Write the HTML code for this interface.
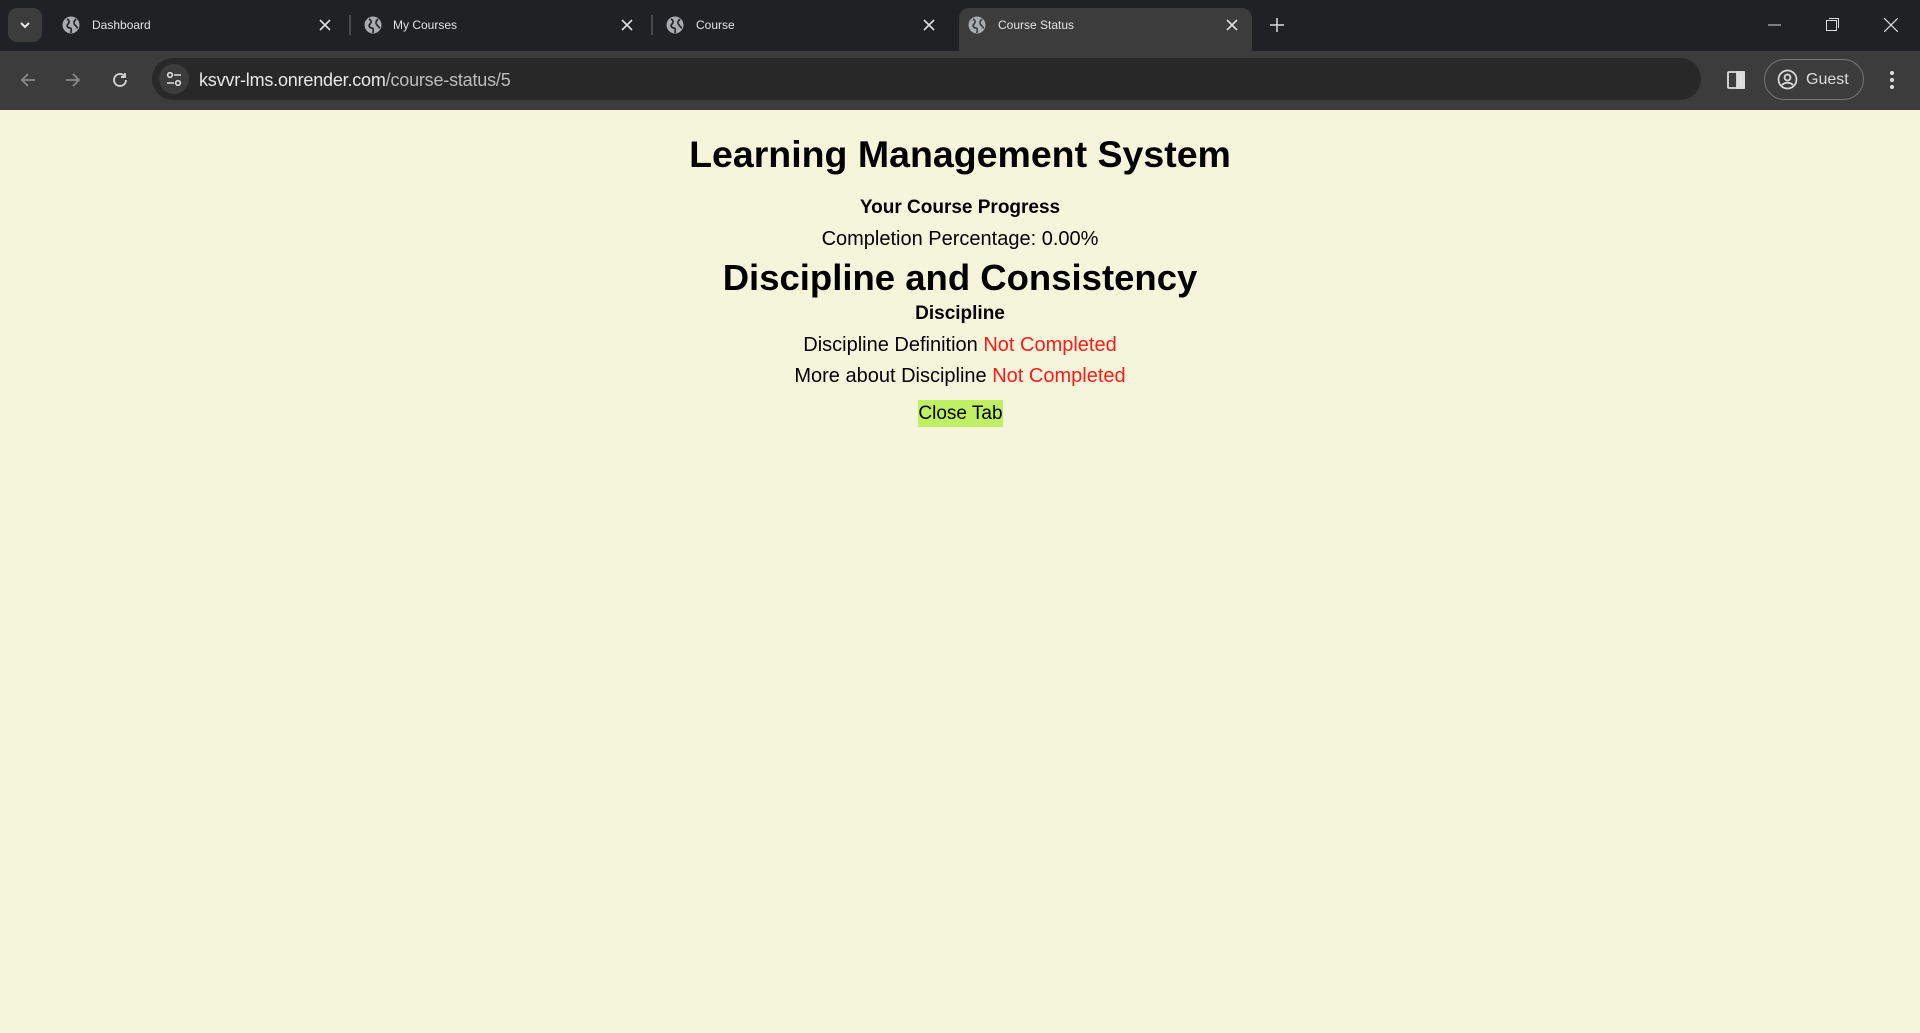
<!DOCTYPE html>
<html><head><meta charset="utf-8"><style>
*{margin:0;padding:0;box-sizing:border-box}
body{width:1920px;height:1033px;background:#f5f5dc;font-family:"Liberation Sans",sans-serif;position:relative;overflow:hidden}
.tabbar{position:absolute;left:0;top:0;width:1920px;height:51px;background:#202124}
.toolbar{position:absolute;left:0;top:51px;width:1920px;height:59px;background:#3c3c3c}
.abs{position:absolute}
.tabt{position:absolute;top:18px;font-size:12px;color:#e3e3e3}
.c{position:absolute;left:0;width:1920px;text-align:center;color:#000;white-space:nowrap}
.red{color:#ff1a1a}
</style></head><body>
<div class="tabbar">
 <div class="abs" style="left:8px;top:8px;width:34px;height:34px;border-radius:9px;background:#3c3c3c"></div>
 <svg class="abs" style="left:19px;top:19px" width="12" height="12" viewBox="0 0 12 12"><path d="M2 4l4 4 4-4" stroke="#e8e8e8" stroke-width="2" fill="none"/></svg>
 <div class="abs" style="left:959px;top:8px;width:293px;height:43px;background:#3c3c3c;border-radius:10px 10px 0 0"></div>
 <svg class="abs" style="left:62px;top:16px" width="18" height="18" viewBox="0 0 18 18"><circle cx="9" cy="9" r="8.5" fill="#a8abb0"/><path d="M5 3c2 1 3 3 1 5s0 4 2 4 1 3 1 5M14 3c-2 2-3 4-1 6s2 3 3 3" stroke="#202124" stroke-width="1.6" fill="none"/></svg>
 <svg class="abs" style="left:364px;top:16px" width="18" height="18" viewBox="0 0 18 18"><circle cx="9" cy="9" r="8.5" fill="#a8abb0"/><path d="M5 3c2 1 3 3 1 5s0 4 2 4 1 3 1 5M14 3c-2 2-3 4-1 6s2 3 3 3" stroke="#202124" stroke-width="1.6" fill="none"/></svg>
 <svg class="abs" style="left:666px;top:16px" width="18" height="18" viewBox="0 0 18 18"><circle cx="9" cy="9" r="8.5" fill="#a8abb0"/><path d="M5 3c2 1 3 3 1 5s0 4 2 4 1 3 1 5M14 3c-2 2-3 4-1 6s2 3 3 3" stroke="#202124" stroke-width="1.6" fill="none"/></svg>
 <svg class="abs" style="left:968px;top:16px" width="18" height="18" viewBox="0 0 18 18"><circle cx="9" cy="9" r="8.5" fill="#a8abb0"/><path d="M5 3c2 1 3 3 1 5s0 4 2 4 1 3 1 5M14 3c-2 2-3 4-1 6s2 3 3 3" stroke="#3c3c3c" stroke-width="1.6" fill="none"/></svg>
 <div class="tabt" style="left:92px">Dashboard</div>
 <div class="tabt" style="left:393px">My Courses</div>
 <div class="tabt" style="left:696px">Course</div>
 <div class="tabt" style="left:998px">Course Status</div>
 <svg class="abs" style="left:319px;top:19px" width="12" height="12"><path d="M1 1l10 10M11 1L1 11" stroke="#dcdcdc" stroke-width="1.6"/></svg>
 <svg class="abs" style="left:621px;top:19px" width="12" height="12"><path d="M1 1l10 10M11 1L1 11" stroke="#dcdcdc" stroke-width="1.6"/></svg>
 <svg class="abs" style="left:923px;top:19px" width="12" height="12"><path d="M1 1l10 10M11 1L1 11" stroke="#dcdcdc" stroke-width="1.6"/></svg>
 <svg class="abs" style="left:1226px;top:19px" width="12" height="12"><path d="M1 1l10 10M11 1L1 11" stroke="#dcdcdc" stroke-width="1.6"/></svg>
 <div class="abs" style="left:349px;top:15px;width:2px;height:20px;background:#4a4a4a"></div>
 <div class="abs" style="left:651px;top:15px;width:2px;height:20px;background:#4a4a4a"></div>
 <svg class="abs" style="left:1270px;top:18px" width="14" height="14"><path d="M7 0v14M0 7h14" stroke="#dcdcdc" stroke-width="1.5"/></svg>
 <svg class="abs" style="left:1768px;top:24px" width="13" height="2"><path d="M0 1h13" stroke="#ddd"/></svg>
 <svg class="abs" style="left:1826px;top:18px" width="13" height="13" fill="none" stroke="#ddd"><rect x="0.5" y="2.5" width="10" height="10"/><path d="M3 0.5h9.5v9.5"/></svg>
 <svg class="abs" style="left:1884px;top:18px" width="14" height="14"><path d="M0 0l14 14M14 0L0 14" stroke="#ddd" stroke-width="1.2"/></svg>
</div>
<div class="toolbar">
 <svg class="abs" style="left:20px;top:21px" width="16" height="16" fill="none" stroke="#8a8a8a" stroke-width="1.8"><path d="M15 8H2M8 2L2 8l6 6"/></svg>
 <svg class="abs" style="left:65px;top:21px" width="16" height="16" fill="none" stroke="#8a8a8a" stroke-width="1.8"><path d="M1 8h13M8 2l6 6-6 6"/></svg>
 <svg class="abs" style="left:111px;top:20px" width="18" height="18" fill="none" stroke="#d0d0d0" stroke-width="1.9"><path d="M15 9a6 6 0 1 1-2-4.5"/><path d="M14 2v4h-4"/></svg>
 <div class="abs" style="left:152px;top:7px;width:1549px;height:42px;border-radius:21px;background:#282828"></div>
 <div class="abs" style="left:159px;top:13px;width:30px;height:30px;border-radius:15px;background:#3c3c3c"></div>
 <svg class="abs" style="left:166px;top:20px" width="16" height="16" fill="none" stroke="#ddd" stroke-width="1.6"><circle cx="4" cy="4" r="2.3"/><path d="M8 4h7M1 12h7"/><circle cx="12" cy="12" r="2.3"/></svg>
 <div class="abs" style="left:199px;top:19px;font-size:18px;color:#e8e8e8;letter-spacing:-0.2px"><span>ksvvr-lms.onrender.com</span><span style="color:#bdbdbd">/course-status/5</span></div>
 <svg class="abs" style="left:1727px;top:20px" width="18" height="18" fill="none" stroke="#ddd" stroke-width="1.8"><rect x="1" y="1" width="16" height="16" rx="1"/><rect x="10" y="1" width="7" height="16" fill="#ddd"/></svg>
 <div class="abs" style="left:1764px;top:8px;width:100px;height:41px;border-radius:21px;border:1px solid #777"></div>
 <svg class="abs" style="left:1777px;top:18px" width="21" height="21" fill="none" stroke="#ddd" stroke-width="1.7"><circle cx="10.5" cy="10.5" r="9"/><circle cx="10.5" cy="8.5" r="3"/><path d="M5 16c3-3 8-3 11 0"/></svg>
 <div class="abs" style="left:1806px;top:20px;font-size:16px;color:#ddd">Guest</div>
 <svg class="abs" style="left:1889px;top:19px" width="6" height="20" fill="#ddd"><circle cx="3" cy="3" r="2"/><circle cx="3" cy="10" r="2"/><circle cx="3" cy="17" r="2"/></svg>
</div>
<div class="c" style="top:133px;font-size:37.5px;font-weight:bold">Learning Management System</div>
<div class="c" style="top:197px;font-size:19px;font-weight:bold">Your Course Progress</div>
<div class="c" style="top:228px;font-size:20px">Completion Percentage: 0.00%</div>
<div class="c" style="top:257px;font-size:36.5px;font-weight:bold">Discipline and Consistency</div>
<div class="c" style="top:303px;font-size:19px;font-weight:bold">Discipline</div>
<div class="c" style="top:334px;font-size:20px">Discipline Definition <span class="red">Not Completed</span></div>
<div class="c" style="top:365px;font-size:20px">More about Discipline <span class="red">Not Completed</span></div>
<div class="abs" style="left:918px;top:400px;width:85px;height:27px;background:#bfef62;font-size:19px;text-align:center;line-height:28px;color:#000">Close Tab</div>
</body></html>
